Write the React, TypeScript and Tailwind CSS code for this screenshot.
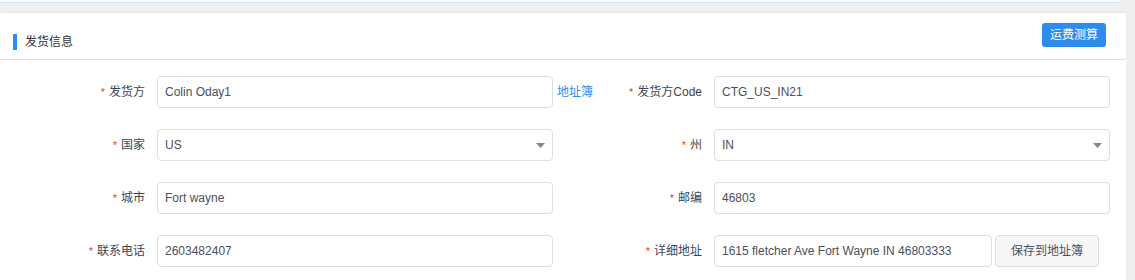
import React from "react";

const font = { fontFamily: '"Liberation Sans", Arial, "Noto Sans CJK SC", sans-serif' };

function Label({ text }: { text: string }) {
  return (
    <div className="w-[145px] shrink-0 flex items-center justify-end text-[12px] text-[#3f4550]">
      <span className="text-[#ed3f14] text-[11px] mr-[4px] leading-none">*</span>
      <span>{text}</span>
    </div>
  );
}

function Input({ value, w = "w-[396px]" }: { value: string; w?: string }) {
  return (
    <div className={`${w} shrink-0 h-[32px] border border-[#dcdee2] rounded-[4px] bg-white flex items-center px-[7px] text-[12px] text-[#495060]`}>
      {value}
    </div>
  );
}

function Select({ value }: { value: string }) {
  return (
    <div className="w-[396px] shrink-0 h-[32px] border border-[#dcdee2] rounded-[4px] bg-white flex items-center justify-between pl-[7px] pr-[7px] text-[12px] text-[#495060]">
      <span>{value}</span>
      <svg width="9" height="5" viewBox="0 0 9 5">
        <path d="M0 0 L9 0 L4.5 5 Z" fill="#808695" />
      </svg>
    </div>
  );
}

export default function App() {
  return (
    <div className="w-[1135px] h-[280px] bg-[#efefef] overflow-hidden" style={font}>
      <div className="w-[1123px] h-[3px] bg-[#f7fbff] border-b border-r border-[#d4e4f7] rounded-br-[3px]" />
      <div className="h-[10px]" />
      <div className="w-[1126px] h-[267px] bg-white shadow-[0_-1px_2px_rgba(0,0,0,0.04)]">
        <div className="h-[47px] border-b border-[#dddee1] flex items-start justify-between pl-[13px] pr-[20px]">
          <div className="flex items-center mt-[20px]">
            <div className="w-[4px] h-[16px] bg-[#2d8cf0]" />
            <span className="ml-[8px] text-[12px] text-[#333]">发货信息</span>
          </div>
          <div className="mt-[10px] w-[64px] h-[24px] rounded-[3px] bg-[#2d8cf0] text-white text-[12px] flex items-center justify-center">
            运费测算
          </div>
        </div>
        <div className="pt-[16px] flex flex-col gap-[21px]">
          <div className="grid grid-cols-[557px_557px]">
            <div className="flex items-center">
              <Label text="发货方" />
              <div className="w-[12px] shrink-0" />
              <Input value="Colin Oday1" />
              <span className="ml-[4px] shrink-0 text-[12px] text-[#2d8cf0]">地址簿</span>
            </div>
            <div className="flex items-center">
              <Label text="发货方Code" />
              <div className="w-[12px] shrink-0" />
              <Input value="CTG_US_IN21" />
            </div>
          </div>
          <div className="grid grid-cols-[557px_557px]">
            <div className="flex items-center">
              <Label text="国家" />
              <div className="w-[12px] shrink-0" />
              <Select value="US" />
            </div>
            <div className="flex items-center">
              <Label text="州" />
              <div className="w-[12px] shrink-0" />
              <Select value="IN" />
            </div>
          </div>
          <div className="grid grid-cols-[557px_557px]">
            <div className="flex items-center">
              <Label text="城市" />
              <div className="w-[12px] shrink-0" />
              <Input value="Fort wayne" />
            </div>
            <div className="flex items-center">
              <Label text="邮编" />
              <div className="w-[12px] shrink-0" />
              <Input value="46803" />
            </div>
          </div>
          <div className="grid grid-cols-[557px_557px]">
            <div className="flex items-center">
              <Label text="联系电话" />
              <div className="w-[12px] shrink-0" />
              <Input value="2603482407" />
            </div>
            <div className="flex items-center">
              <Label text="详细地址" />
              <div className="w-[12px] shrink-0" />
              <Input value="1615 fletcher Ave Fort Wayne IN 46803333" w="w-[278px]" />
              <div className="ml-[3px] w-[104px] h-[32px] shrink-0 border border-[#dcdee2] rounded-[4px] bg-[#f7f7f7] flex items-center justify-center text-[12px] text-[#495060]">
                保存到地址簿
              </div>
            </div>
          </div>
        </div>
      </div>
    </div>
  );
}
